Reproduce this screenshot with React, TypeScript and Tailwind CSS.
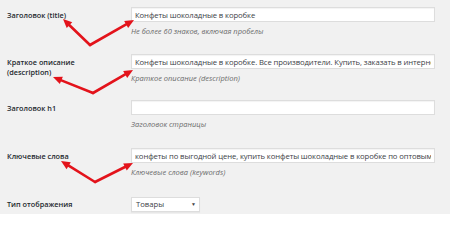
import React from "react";

type Row = {
  label: React.ReactNode;
  value: string;
  hint?: string;
  height: string;
};

const rows: Row[] = [
  { label: "Заголовок (title)", value: "Конфеты шоколадные в коробке", hint: "Не более 60 знаков, включая пробелы", height: "h-[47px]" },
  {
    label: (
      <>
        Краткое описание
        <br />
        (description)
      </>
    ),
    value: "Конфеты шоколадные в коробке. Все производители. Купить, заказать в интернет",
    hint: "Краткое описание (description)",
    height: "h-[46px]",
  },
  { label: "Заголовок h1", value: "", hint: "Заголовок страницы", height: "h-[48px]" },
  {
    label: "Ключевые слова",
    value: "конфеты по выгодной цене, купить конфеты шоколадные в коробке по оптовым ценам",
    hint: "Ключевые слова (keywords)",
    height: "h-[49px]",
  },
];

function Arrow({ x1, y1, x2, y2 }: { x1: number; y1: number; x2: number; y2: number }) {
  const dx = x2 - x1;
  const dy = y2 - y1;
  const len = Math.hypot(dx, dy);
  const ux = dx / len;
  const uy = dy / len;
  const head = 9;
  const half = 4;
  const bx = x2 - ux * head;
  const by = y2 - uy * head;
  const pts = `${x2},${y2} ${bx - uy * half},${by + ux * half} ${bx + uy * half},${by - ux * half}`;
  return (
    <>
      <line x1={x1} y1={y1} x2={bx} y2={by} stroke="#e3131b" strokeWidth={2.6} strokeLinecap="round" />
      <polygon points={pts} fill="#e3131b" />
    </>
  );
}

function Arrows() {
  const pairs = [
    { v: [90, 45], a: [63, 19], b: [134, 20] },
    { v: [93, 93], a: [53, 77], b: [133, 70] },
    { v: [95, 182], a: [61, 161], b: [133, 163] },
  ];
  return (
    <svg className="pointer-events-none absolute left-0 top-0" width={450} height={214} viewBox="0 0 450 214">
      {pairs.map((p, i) => (
        <g key={i}>
          <Arrow x1={p.v[0]} y1={p.v[1]} x2={p.a[0]} y2={p.a[1]} />
          <Arrow x1={p.v[0]} y1={p.v[1]} x2={p.b[0]} y2={p.b[1]} />
        </g>
      ))}
    </svg>
  );
}

export default function App() {
  return (
    <div className="relative h-[214px] w-[450px] overflow-hidden bg-[#f1f1f1] font-['Open_Sans',sans-serif] text-[#23282d]">
      <div className="flex flex-col pl-[7px] pt-[7px]">
        {rows.map((row, i) => (
          <div key={i} className={`flex ${row.height}`}>
            <div className="w-[124px] shrink-0 pt-[3px] text-[7.3px] font-semibold leading-[10px]">{row.label}</div>
            <div className="w-[304px]">
              <input
                readOnly
                value={row.value}
                className="block h-[15px] w-full border border-[#dddddd] bg-white px-[3px] text-[7.7px] tracking-[-0.1px] text-[#3c4146] shadow-[inset_0_1px_1px_rgba(0,0,0,0.05)] outline-none"
              />
              {row.hint ? (
                <p className="mt-[4px] text-[7.5px] italic leading-[10px] text-[#6b6b6b]">{row.hint}</p>
              ) : null}
            </div>
          </div>
        ))}
        <div className="flex">
          <div className="w-[124px] shrink-0 pt-[2px] text-[7.3px] font-semibold leading-[10px]">Тип отображения</div>
          <div className="flex h-[15px] w-[69px] items-center justify-between border border-[#dddddd] bg-white pl-[4px] pr-[3px] text-[7.7px] text-[#3c4146] shadow-[0_1px_1px_rgba(0,0,0,0.04)]">
            <span>Товары</span>
            <span className="text-[5px] text-[#444]">▼</span>
          </div>
        </div>
      </div>
      <Arrows />
    </div>
  );
}
